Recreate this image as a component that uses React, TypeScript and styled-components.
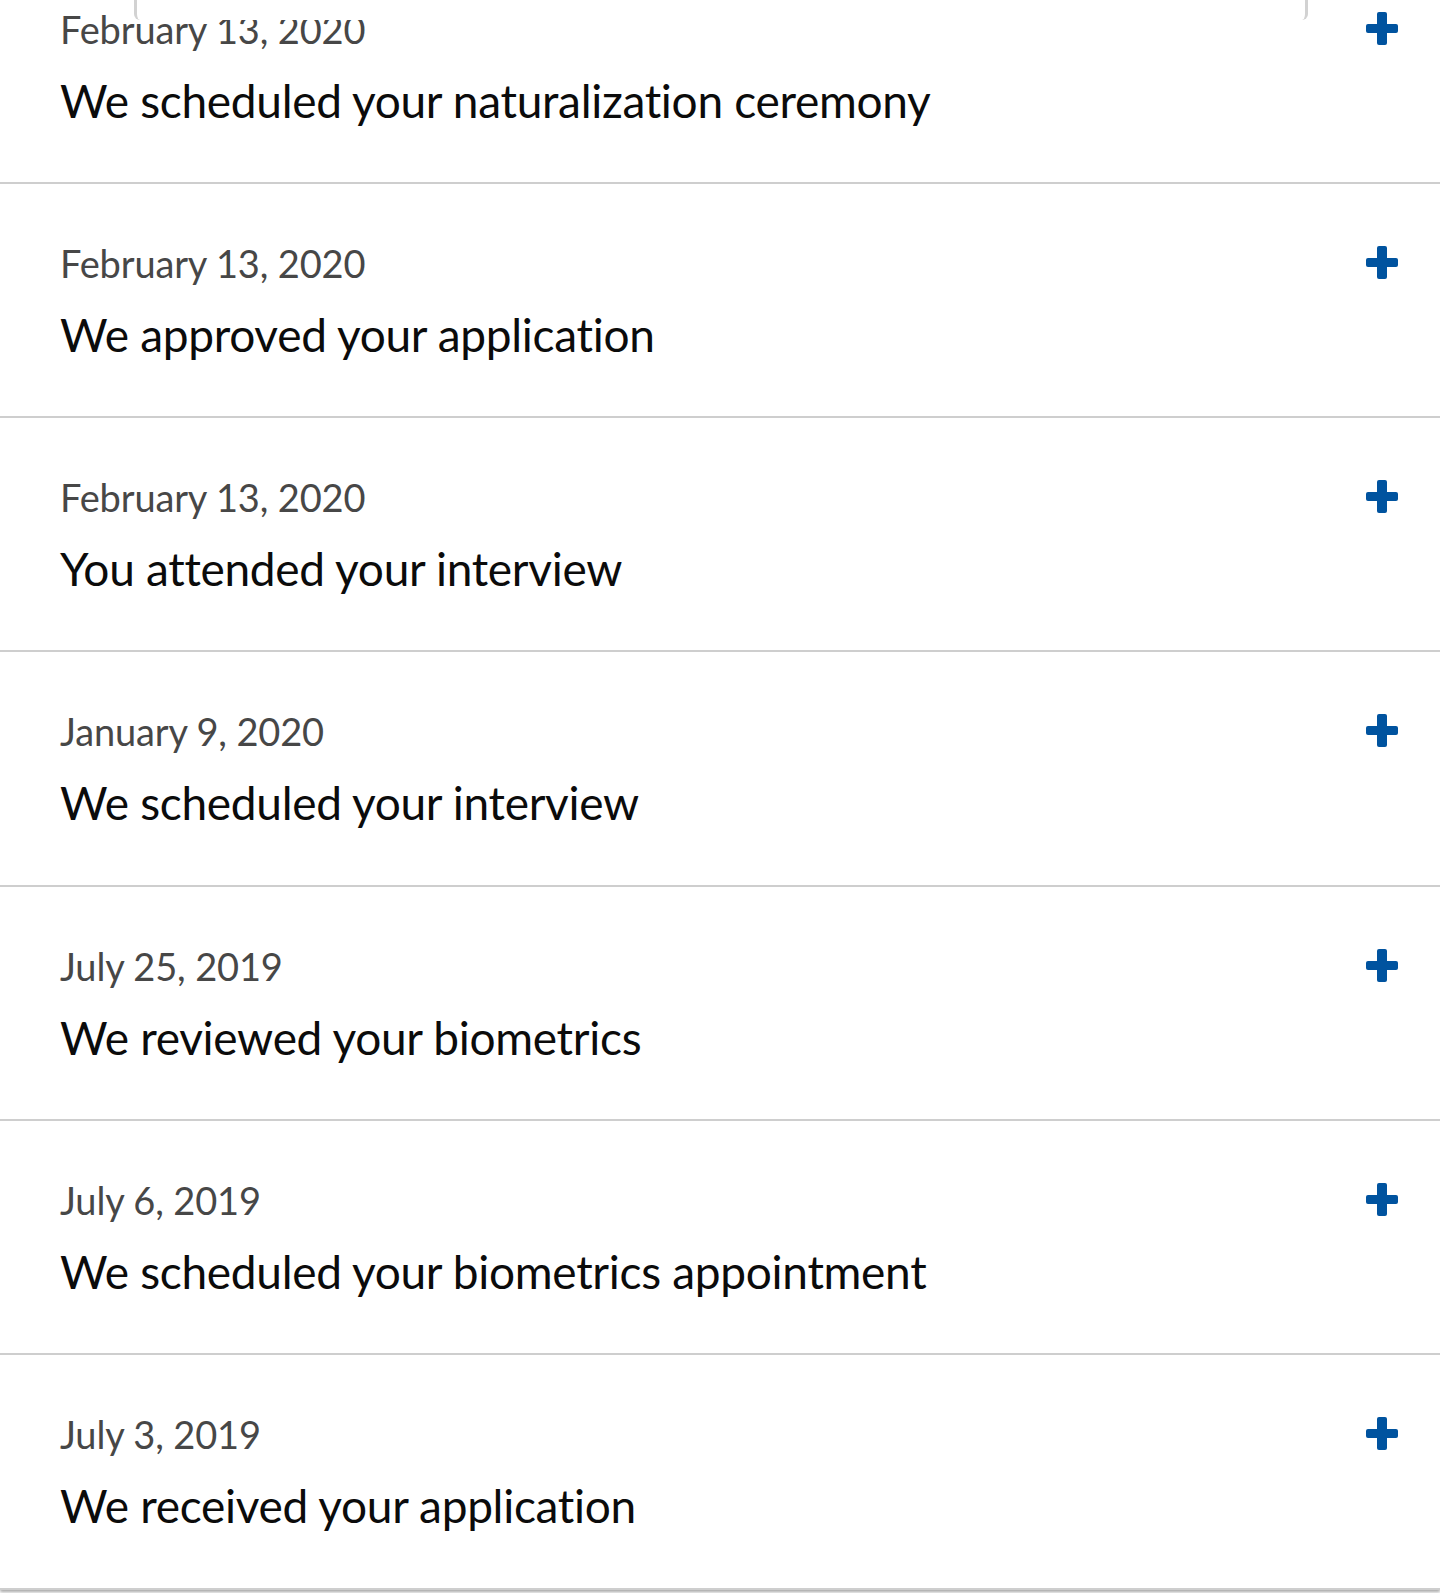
import styled, { createGlobalStyle } from 'styled-components';

const GlobalStyle = createGlobalStyle`
    html, body {
        margin: 0;
        padding: 0;
        background: #ffffff;
        overflow: hidden;
    }
    body {
        font-family: Lato, "Noto Sans", "Liberation Sans", sans-serif;
        -webkit-font-smoothing: antialiased;
    }
`;

const Page = styled.div`
    position: relative;
    width: 1440px;
    height: 1593px;
    overflow: hidden;
    background: #ffffff;
`;

// the bottom of the status card that is scrolled under the top of the view
const CardEdge = styled.div`
    position: absolute;
    top: 0;
    left: 134px;
    width: 1168px;
    height: 20px;
    background: #ffffff;
    border: 3px solid #d2d2d2;
    border-top: 0;
    border-bottom: 0;
    border-bottom-left-radius: 6px;
    border-bottom-right-radius: 6px;
    z-index: 2;
`;

const History = styled.ul`
    list-style: none;
    margin: -50.5px 0 0;
    padding: 0;
    box-shadow: 0 2px 3px rgba(0, 0, 0, 0.35);
`;

const Event = styled.li`
    box-sizing: border-box;
    height: 234.33px;
    display: grid;
    grid-template-columns: 1fr auto;
    padding: 0 42px 0 60px;
    border-bottom: 2px solid #cecece;
`;

const EventText = styled.div`
    padding-top: 60px;
`;

const EventDate = styled.div`
    font-size: 38px;
    line-height: 38px;
    color: #474747;
    letter-spacing: -0.15px;
`;

const EventTitle = styled.div`
    margin-top: 30px;
    font-size: 46px;
    line-height: 46px;
    color: #0b0b0b;
    letter-spacing: -0.3px;
`;

const ExpandButton = styled.button`
    align-self: start;
    margin-top: 62px;
    padding: 0;
    border: 0;
    background: none;
    width: 32px;
    height: 33px;
    cursor: pointer;
    svg {
        display: block;
    }
`;

const PlusIcon = () => (
    <svg width="32" height="33" viewBox="0 0 32 33" fill="#00539f">
        <rect x="0" y="12" width="32" height="9" rx="2" />
        <rect x="11" y="0" width="10" height="33" rx="2" />
    </svg>
);

const events = [
    { date: 'February 13, 2020', title: 'We scheduled your naturalization ceremony' },
    { date: 'February 13, 2020', title: 'We approved your application' },
    { date: 'February 13, 2020', title: 'You attended your interview' },
    { date: 'January 9, 2020', title: 'We scheduled your interview' },
    { date: 'July 25, 2019', title: 'We reviewed your biometrics' },
    { date: 'July 6, 2019', title: 'We scheduled your biometrics appointment' },
    { date: 'July 3, 2019', title: 'We received your application' },
];

export default function App() {
    return (
        <Page>
            <GlobalStyle />
            <CardEdge />
            <History>
                {events.map((event, i) => (
                    <Event key={i}>
                        <EventText>
                            <EventDate>{event.date}</EventDate>
                            <EventTitle>{event.title}</EventTitle>
                        </EventText>
                        <ExpandButton aria-label="Show details">
                            <PlusIcon />
                        </ExpandButton>
                    </Event>
                ))}
            </History>
        </Page>
    );
}
